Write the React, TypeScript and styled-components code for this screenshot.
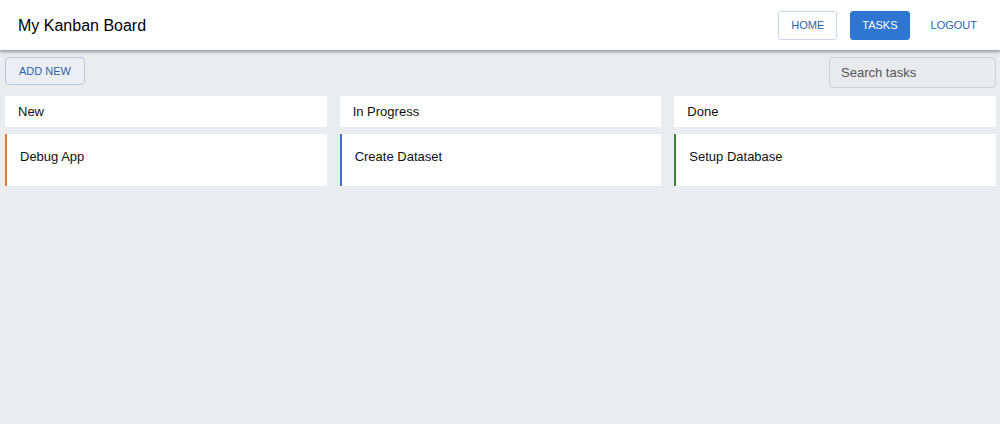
import React from "react";
import styled, { createGlobalStyle } from "styled-components";

const Global = createGlobalStyle`
  html, body { margin: 0; padding: 0; background: #ebecf0; }
  body { font-family: "Liberation Sans", Arial, sans-serif; color: #111; }
  * { box-sizing: border-box; }
`;

const Header = styled.header`
  height: 50px;
  background: #fff;
  display: flex;
  align-items: center;
  justify-content: space-between;
  padding: 0 22px 0 18px;
  box-shadow: 0 2px 3px rgba(0, 0, 0, 0.35);
  position: relative;
  z-index: 1;
`;

const Title = styled.h1`
  margin: 1px 0 0;
  font-size: 16px;
  font-weight: 400;
  color: #000;
`;

const Nav = styled.nav`
  display: flex;
  align-items: center;
  gap: 13px;
`;

const NavButton = styled.button<{ $variant: "outline" | "solid" | "text" }>`
  height: 29px;
  font-family: inherit;
  font-size: 11px;
  border-radius: 3px;
  cursor: pointer;
  border: 1px solid
    ${(p) => (p.$variant === "outline" ? "#c9d6e6" : p.$variant === "solid" ? "#2e76d2" : "transparent")};
  background: ${(p) => (p.$variant === "solid" ? "#2e76d2" : "#fff")};
  color: ${(p) => (p.$variant === "solid" ? "#fff" : "#2a64ab")};
  margin-left: ${(p) => (p.$variant === "text" ? "7px" : "0")};
  padding: ${(p) => (p.$variant === "text" ? "0" : p.$variant === "solid" ? "0 11px" : "0 12px")};
`;

const Toolbar = styled.div`
  display: flex;
  justify-content: space-between;
  align-items: flex-start;
  padding: 7px 4px 0 5px;
  height: 46px;
`;

const AddButton = styled.button`
  height: 28px;
  padding: 0 13px;
  font-family: inherit;
  font-size: 11px;
  color: #2a64ab;
  background: #eceef3;
  border: 1px solid #b7c6da;
  border-radius: 4px;
`;

const Search = styled.input`
  width: 167px;
  height: 31px;
  padding: 0 11px;
  font-family: inherit;
  font-size: 13px;
  background: #e9eaee;
  border: 1px solid #cfd0d4;
  border-radius: 4px;
  outline: none;
  &::placeholder { color: #555; }
`;

const Board = styled.div`
  display: grid;
  grid-template-columns: repeat(3, 1fr);
  gap: 13px;
  padding: 0 4px 0 5px;
`;

const Column = styled.section`
  display: flex;
  flex-direction: column;
  gap: 7px;
`;

const ColumnHeader = styled.div`
  height: 31px;
  background: #fff;
  display: flex;
  align-items: center;
  padding: 0 13px;
  font-size: 13px;
  color: #111;
`;

const Card = styled.div<{ $color: string }>`
  height: 52px;
  background: #fff;
  border-left: 2px solid ${(p) => p.$color};
  padding: 15px 13px 0 13px;
  font-size: 13px;
  color: #111;
`;

const columns = [
  { title: "New", tasks: [{ name: "Debug App", color: "#e07b2c" }] },
  { title: "In Progress", tasks: [{ name: "Create Dataset", color: "#2f7cc9" }] },
  { title: "Done", tasks: [{ name: "Setup Database", color: "#3b823a" }] },
];

export default function App() {
  return (
    <>
      <Global />
      <Header>
        <Title>My Kanban Board</Title>
        <Nav>
          <NavButton $variant="outline">HOME</NavButton>
          <NavButton $variant="solid">TASKS</NavButton>
          <NavButton $variant="text">LOGOUT</NavButton>
        </Nav>
      </Header>
      <Toolbar>
        <AddButton>ADD NEW</AddButton>
        <Search placeholder="Search tasks" />
      </Toolbar>
      <Board>
        {columns.map((c) => (
          <Column key={c.title}>
            <ColumnHeader>{c.title}</ColumnHeader>
            {c.tasks.map((t) => (
              <Card key={t.name} $color={t.color}>
                {t.name}
              </Card>
            ))}
          </Column>
        ))}
      </Board>
    </>
  );
}
